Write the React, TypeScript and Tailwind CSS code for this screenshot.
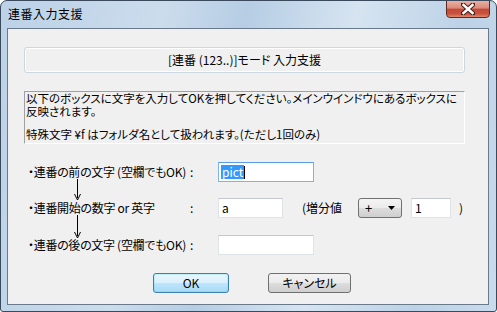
import React from "react";

const font = "font-['Noto_Sans_CJK_JP','Noto_Sans',sans-serif] [font-feature-settings:'palt']";

function TextBox({ w, value, selected }: { w: string; value?: string; selected?: boolean }) {
  return (
    <div
      className={`${w} shrink-0 h-[20px] bg-white border flex items-center px-[2px] ${
        selected ? "border-[#7eb4ea] border-t-[#569de5]" : "border-[#dfe3e8] border-t-[#c3c7ce]"
      }`}
    >
      {value && (
        <span className={`text-[12px] leading-[14px] px-[1px] ${selected ? "bg-[#3399ff] text-white" : "text-black"}`}>
          {value}
        </span>
      )}
      {selected && <span className="w-[1px] h-[13px] bg-black" />}
    </div>
  );
}

function Arrow({ top, height }: { top: number; height: number }) {
  return (
    <svg className="absolute left-[66px]" style={{ top, height }} width="7" height={height}>
      <line x1="3.5" y1="0" x2="3.5" y2={height - 2} stroke="#000" strokeWidth="1" />
      <path d={`M0.5 ${height - 6} L3.5 ${height} L6.5 ${height - 6}`} fill="none" stroke="#000" strokeWidth="1" />
    </svg>
  );
}

export default function App() {
  return (
    <div className={`${font} w-[497px] h-[312px] flex flex-col border border-[#3a4a5c] rounded-t-[7px] rounded-b-[3px] bg-[linear-gradient(100deg,#bcd2e8_0%,#cbdcec_30%,#b6cde4_45%,#d6e4f1_65%,#bdd2e7_85%,#c9dbec_100%)] text-black overflow-hidden`}>
      {/* TITLE BAR */}
      <div className="h-[27px] flex items-start justify-between pl-[7px] pr-[6px]">
        <span className="text-[12px] leading-[12px] mt-[7px] tracking-[0.5px]">連番入力支援</span>
        <div className="w-[44px] h-[18px] -mt-[1px] rounded-b-[4px] border border-[#5e2a22] bg-[linear-gradient(#e8b0a3_0%,#d98a79_45%,#c4483a_50%,#c9533f_80%,#e08a6f_100%)] flex items-center justify-center">
          <svg width="14" height="12" viewBox="0 0 14 12">
            <path d="M2 1.5 L12 10.5 M12 1.5 L2 10.5" stroke="#4a1f18" strokeWidth="4.5" strokeLinecap="square" />
            <path d="M2.5 2 L11.5 10 M11.5 2 L2.5 10" stroke="#fff" strokeWidth="2.5" strokeLinecap="square" />
          </svg>
        </div>
      </div>

      {/* CLIENT */}
      <div className="flex-1 pl-[6px] pr-[7px] pb-[6px] flex">
        <div className="relative flex-1 border border-[#6b7a8a] bg-[#f0f0f0] flex flex-col text-[12px] leading-[12px] whitespace-nowrap">
          {/* header box */}
          <div className="ml-[16px] mt-[18px] w-[441px] h-[26px] rounded-[3px] border border-[#cbd7e1] shadow-[inset_0_0_0_1px_#ffffff] flex items-center justify-center">
            [連番 (123..)]モード 入力支援
          </div>

          {/* description */}
          <div className="ml-[16px] mt-[18px] w-[441px] h-[53px] border border-[#a0a0a0] border-b-white border-r-white px-[1px] text-[11.5px] leading-[13px]">
            <p>
              以下のボックスに文字を入力してOKを押してください。メインウインドウにあるボックスに
              <br />
              反映されます。
            </p>
            <p className="mt-[10px]">特殊文字 ¥f はフォルダ名として扱われます。(ただし1回のみ)</p>
          </div>

          {/* row 1 */}
          <div className="ml-[20px] mt-[18px] h-[20px] flex items-center">
            <span className="w-[162px] shrink-0 tracking-[-0.3px]">・連番の前の文字 (空欄でもOK)</span>
            <span className="w-[28px] shrink-0">:</span>
            <TextBox w="w-[96px]" value="pict" selected />
          </div>

          {/* row 2 */}
          <div className="ml-[20px] mt-[16px] h-[20px] flex items-center">
            <span className="w-[162px] shrink-0 tracking-[-0.3px]">・連番開始の数字 or 英字</span>
            <span className="w-[28px] shrink-0">:</span>
            <TextBox w="w-[65px]" value="a" />
            <span className="ml-[19px] w-[56px] shrink-0">(増分値</span>
            <div className="w-[44px] shrink-0 h-[20px] rounded-[3px] border border-[#707070] bg-[linear-gradient(#f4f4f4_0%,#ebebeb_50%,#dddddd_51%,#cfcfcf_100%)] flex items-center justify-between pl-[6px] pr-[6px]">
              <span className="text-[13px]">+</span>
              <svg width="7" height="4" viewBox="0 0 7 4">
                <path d="M0 0 L7 0 L3.5 4 Z" fill="#000" />
              </svg>
            </div>
            <div className="ml-[9px]">
              <TextBox w="w-[40px]" value="1" />
            </div>
            <span className="ml-[8px]">)</span>
          </div>

          {/* row 3 */}
          <div className="ml-[20px] mt-[17px] h-[20px] flex items-center">
            <span className="w-[162px] shrink-0 tracking-[-0.3px]">・連番の後の文字 (空欄でもOK)</span>
            <span className="w-[28px] shrink-0">:</span>
            <TextBox w="w-[96px]" />
          </div>

          {/* buttons */}
          <div className="ml-[145px] mt-[18px] flex gap-[39px]">
            <button className="w-[76px] h-[20px] rounded-[3px] border border-[#3c7fb1] bg-[linear-gradient(#eaf6fd_0%,#d9f0fc_50%,#bee6fd_51%,#a7d9f5_100%)] shadow-[inset_0_0_0_1px_#48dcfb40] flex items-center justify-center">
              OK
            </button>
            <button className="w-[83px] h-[20px] rounded-[3px] border border-[#707070] bg-[linear-gradient(#f2f2f2_0%,#ebebeb_50%,#dddddd_51%,#cfcfcf_100%)] flex items-center justify-center">
              キャンセル
            </button>
          </div>

          <Arrow top={150} height={21} />
          <Arrow top={186} height={23} />
        </div>
      </div>
    </div>
  );
}
